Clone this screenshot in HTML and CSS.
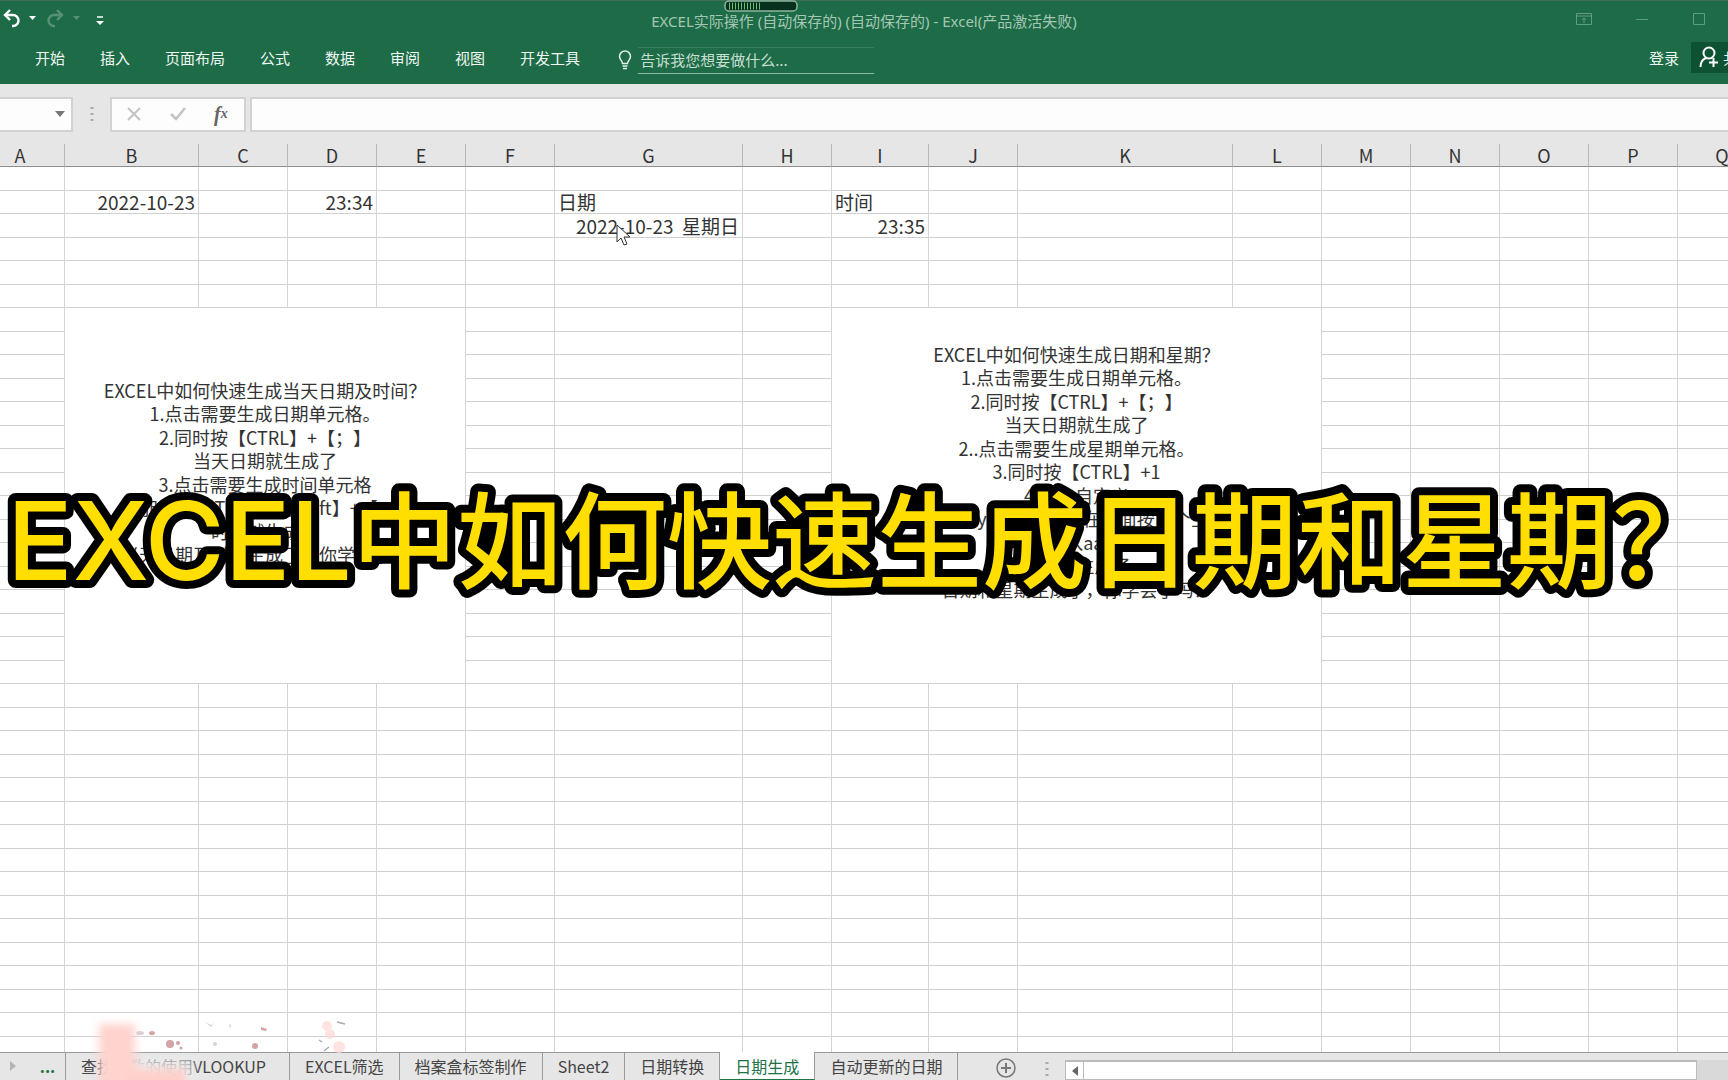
FILE: index.html
```html
<!DOCTYPE html>
<html lang="zh-CN">
<head>
<meta charset="utf-8">
<title>EXCEL实际操作 - Excel</title>
<link rel="stylesheet" href="styles.css">
</head>
<body>
<div class="app">
  <header class="ribbon">
    <div class="titlebar">
      <div class="quick">
        <button class="tool" aria-label="撤消"><svg width="36" height="20" viewBox="0 0 36 20"><path d="M10 2 5 7l5 5M6 7h7a5 5 0 0 1 0 11h-1" fill="none" stroke="#fff" stroke-width="2.4"/><path d="M29 8h7l-3.500 4z" fill="#fff"/></svg></button>
        <button class="tool faded" aria-label="恢复"><svg width="36" height="20" viewBox="0 0 36 20"><path d="M13 2l5 5-5 5M17 7h-7a5 5 0 0 0 0 11h1" fill="none" stroke="#fff" stroke-width="2.400"/><path d="M29 8h7l-3.500 4z" fill="#fff"/></svg></button>
        <button class="tool" aria-label="自定义快速访问工具栏"><svg width="8" height="20" viewBox="0 0 8 20"><path d="M1 9h6" stroke="#fff" stroke-width="1.500"/><path d="M0 13h8l-4 4z" fill="#fff"/></svg></button>
      </div>
      <h1 class="doc">EXCEL实际操作 (自动保存的) (自动保存的) - Excel(产品激活失败)</h1>
      <div class="window">
        <button class="tool" aria-label="功能区显示选项"><svg width="16" height="14" viewBox="0 0 16 14"><path d="M.5 1.500h15v11H.5zM.5 4h15M8 11V6M6 8l2-2 2 2" fill="none" stroke="#5f9d7f"/></svg></button>
        <button class="tool" aria-label="最小化"><svg width="14" height="14" viewBox="0 0 14 14"><path d="M1 7.500h12" stroke="#5f9d7f"/></svg></button>
        <button class="tool" aria-label="最大化"><svg width="14" height="14" viewBox="0 0 14 14"><path d="M1.500 1.500h11v11h-11z" fill="none" stroke="#5f9d7f"/></svg></button>
      </div>
      <svg class="meter" width="74" height="12" viewBox="0 0 74 12" aria-hidden="true"><rect x="1" y="1" width="72" height="10" rx="4" fill="#08301f" stroke="#8fb5a0" stroke-width="1.500"/><path d="M5 6h33" stroke="#6cc06a" stroke-width="7" stroke-dasharray="1 2"/></svg>
    </div>
    <nav class="menu">
      <a href="#">开始</a><a href="#">插入</a><a href="#">页面布局</a><a href="#">公式</a><a href="#">数据</a><a href="#">审阅</a><a href="#">视图</a><a href="#">开发工具</a>
      <label class="tell"><svg width="14" height="20" viewBox="0 0 14 20"><path d="M4.500 13.500C4.500 11 1.500 9.500 1.500 6.500a5.500 5.500 0 0 1 11 0c0 3-3 4.500-3 7zM4.500 16h5M5 18.500h4" fill="none" stroke="#e4f1ea" stroke-width="1.500"/></svg><input type="text" placeholder="告诉我您想要做什么..." aria-label="告诉我您想要做什么"></label>
      <div class="account">
        <a href="#">登录</a>
        <button class="share"><svg width="20" height="22" viewBox="0 0 20 22"><circle cx="10" cy="7" r="5.500" fill="none" stroke="#fff" stroke-width="2"/><path d="M1.500 21c0-5 2.500-8 6-9M14.500 12v9M10 16.500h9" fill="none" stroke="#fff" stroke-width="2"/></svg><span>共享</span></button>
      </div>
    </nav>
  </header>

  <div class="formula">
    <button class="namebox" aria-label="名称框"><svg width="10" height="6" viewBox="0 0 10 6"><path d="M0 0h10L5 6z" fill="#777"/></svg></button>
    <svg class="grip" width="4" height="16" viewBox="0 0 4 16"><path d="M2 1v14" stroke="#aaa" stroke-width="3" stroke-dasharray="2 4"/></svg>
    <div class="actions">
      <button class="tool" aria-label="取消"><svg width="16" height="14" viewBox="0 0 16 14"><path d="M2 1l12 12M14 1L2 13" stroke="#c2c2c2" stroke-width="2"/></svg></button>
      <button class="tool" aria-label="输入"><svg width="16" height="14" viewBox="0 0 16 14"><path d="M1 7l5 5 9-11" fill="none" stroke="#c2c2c2" stroke-width="2.500"/></svg></button>
      <button class="tool fx" aria-label="插入函数">f<sub>x</sub></button>
    </div>
    <input class="entry" type="text" aria-label="编辑栏">
  </div>

  <main class="sheet">
    <table class="grid">
      <colgroup><col class="n"><col class="b"><col class="n" span="4"><col class="g"><col class="n"><col class="i"><col class="n"><col class="k"><col class="n" span="6"></colgroup>
      <thead><tr><th>A</th><th>B</th><th>C</th><th>D</th><th>E</th><th>F</th><th>G</th><th>H</th><th>I</th><th>J</th><th>K</th><th>L</th><th>M</th><th>N</th><th>O</th><th>P</th><th>Q</th></tr></thead>
      <tbody id="rows"></tbody>
    </table>
    <svg class="pointer" width="16" height="24" viewBox="0 0 16 24" aria-hidden="true"><path d="M1 1v17l4-4 3 7 3-1-3-7h6z" fill="#fff" stroke="#333"/></svg>
  </main>

  <footer class="tabs">
    <button class="tool next" aria-label="下一个工作表"><svg width="6" height="10" viewBox="0 0 6 10"><path d="M0 0l6 5-6 5z" fill="#b5b5b5"/></svg></button>
    <button class="tool more" aria-label="更多工作表">...</button>
    <a class="tab first" href="#">查找函数的使用VLOOKUP</a><a class="tab" href="#">EXCEL筛选</a><a class="tab" href="#">档案盒标签制作</a><a class="tab" href="#">Sheet2</a><a class="tab" href="#">日期转换</a><a class="tab active" href="#">日期生成</a><a class="tab" href="#">自动更新的日期</a>
    <button class="tool add" aria-label="新工作表"><svg width="20" height="20" viewBox="0 0 20 20"><circle cx="10" cy="10" r="9" fill="none" stroke="#777" stroke-width="1.500"/><path d="M10 5v10M5 10h10" stroke="#777" stroke-width="2"/></svg></button>
    <svg class="grip" width="4" height="16" viewBox="0 0 4 16"><path d="M2 1v14" stroke="#aaa" stroke-width="3" stroke-dasharray="2 4"/></svg>
    <div class="scroll"><button class="tool" aria-label="向左滚动"><svg width="6" height="10" viewBox="0 0 6 10"><path d="M6 0v10L0 5z" fill="#666"/></svg></button><div class="track"></div></div>
    <div class="end"></div>
  </footer>

  <svg class="petals" width="280" height="70" viewBox="0 0 280 70" aria-hidden="true">
    <defs><filter id="soft" x="-30%" y="-30%" width="160%" height="160%"><feGaussianBlur stdDeviation="4"/></filter></defs>
    <g filter="url(#soft)"><path d="M48 48h20v30H48z" fill="#efe6e5"/><path d="M62 48h52v30H62z" fill="#ededed" opacity=".8"/><path d="M19 14h36v70H19z" fill="#ffd3ce"/><path d="M50 59h56v30H50z" fill="#ffcfca"/></g>
    <g fill="#ffdcdc" opacity=".8"><circle cx="247" cy="16" r="5"/><circle cx="250" cy="24" r="5"/><circle cx="259" cy="37" r="6"/></g>
    <g fill="#d3a3a8"><circle cx="90" cy="34" r="4"/><ellipse cx="72" cy="23" rx="3" ry="2"/><circle cx="175" cy="36" r="3"/><path d="M181 17l6 2-1 2-5-1z"/><circle cx="98" cy="33" r="2"/><circle cx="101" cy="38" r="1.500"/></g>
    <g fill="#ddd0d3"><ellipse cx="60" cy="23" rx="4" ry="2"/><circle cx="135" cy="34" r="2"/><path d="M125 12l6 3 3-2-3 4zM149 14l2 1-1 4z"/></g>
    <path d="M257 12l8 2M239 30l3 2M244 41l5-4" stroke="#aaa" stroke-width="1.500"/>
  </svg>

  <svg class="caption"><text x="7" y="120"><tspan class="latin">EXCEL</tspan>中如何快速生成日期和星期？</text></svg>
</div>
<script src="sheet.js"></script>
</body>
</html>
```
FILE: styles.css
```css
* { box-sizing: border-box; }
body {
  margin: 0;
  font-family: "Noto Sans CJK SC", sans-serif;
  font-size: 15px;
  color: #333;
}
a { color: inherit; text-decoration: none; }
button, input { font: inherit; color: inherit; margin: 0; padding: 0; border: 0; border-radius: 0; outline: 0; }
svg { display: block; flex: none; }
.app { position: relative; display: flex; flex-direction: column; height: 100vh; overflow: hidden; background: #fff; }
.tool { display: flex; align-items: center; justify-content: center; background: none; }

.ribbon { flex: none; height: 84px; background: #1e6b47; border-top: 1px solid #3f6f56; color: #f0f7f3; }
.titlebar { position: relative; display: grid; grid-template-columns: 1fr auto 1fr; height: 40px; }
.quick { display: flex; align-items: flex-start; gap: 8px; padding-top: 7px; }
.quick .tool:last-child { margin-left: 8px; }
.faded { opacity: .25; }
.doc { margin: 0; font-family: "Noto Sans", "Noto Sans CJK SC", sans-serif; font-size: 15px; font-weight: 400; line-height: 40px; color: #a3c7b3; }
.window { display: flex; align-items: flex-start; justify-content: flex-end; gap: 43px; padding: 11px 22px 0 0; }
.meter { position: absolute; top: -1px; left: 724px; }
.menu { display: flex; align-items: center; gap: 35px; height: 32px; padding-left: 35px; white-space: nowrap; }
.tell { display: flex; align-items: center; gap: 6px; margin: 6px 0 0 3px; }
.tell input { width: 236px; height: 27px; padding: 0 0 2px 2px; background: none; border-top: 1px solid #387e5c; border-bottom: 1px solid #8db8a1; }
.tell input::placeholder { color: #c5dfd0; opacity: 1; }
.account { display: flex; align-items: center; gap: 12px; width: 79px; margin-left: auto; }
.share { display: flex; align-items: center; gap: 4px; height: 31px; padding: 0 8px; background: #0d5232; }

.formula { flex: none; display: flex; align-items: center; height: 60px; background: #e6e6e6; }
.namebox { display: flex; align-items: center; justify-content: flex-end; width: 73px; height: 35px; padding-right: 6px; background: #fdfdfd; border: 2px solid #d2d2d2; border-left: 0; }
.formula .grip { margin: 0 16px 0 17px; }
.actions { display: flex; align-items: center; gap: 28px; width: 136px; height: 35px; padding-left: 14px; background: #fdfdfd; border: 2px solid #d2d2d2; }
.fx { font-family: "Liberation Serif", serif; font-size: 20px; font-style: italic; font-weight: 700; color: #666; }
.fx sub { font-size: 14px; }
.entry { flex: 1; height: 35px; margin-left: 4px; padding: 0 8px; background: #fdfdfd; border: 2px solid #d2d2d2; border-right: 0; }

.sheet { position: relative; flex: 1; min-height: 0; overflow: hidden; }
.grid { width: 1791px; margin-left: -24px; table-layout: fixed; border-collapse: separate; border-spacing: 0; font-size: 19px; line-height: 22px; text-spacing-trim: space-all; }
.n { width: 89px; }
.b { width: 134px; }
.g { width: 188px; }
.i { width: 97px; }
.k { width: 215px; }
th { height: 23px; padding: 0; font-size: 18px; font-weight: 400; background: #e6e6e6; border-bottom: 1px solid #8f8f8f; border-right: 1px solid #b8b8b8; }
td { padding: 0 3px; border-right: 1px solid #d4d4d4; border-bottom: 1px solid #d0d0d0; white-space: nowrap; }
tbody tr { height: 23px; }
tbody tr:nth-child(odd) { height: 24px; }
.num { text-align: right; }
.note { padding-bottom: 48px; font-size: 18px; text-align: center; vertical-align: middle; }
.note p { margin: 0; line-height: 23px; }
.note p:nth-child(odd) { line-height: 24px; }
.pointer { position: absolute; top: 80px; left: 616px; }

.tabs { flex: none; display: flex; align-items: stretch; height: 28px; background: #e6e6e6; box-shadow: inset 0 1px #999; font-size: 16px; line-height: 28px; color: #444; white-space: nowrap; }
.next { width: 26px; }
.more { width: 40px; padding-left: 4px; font-weight: 700; color: #217346; border-right: 1px solid #999; }
.tab { padding: 0 15px; border-right: 1px solid #999; }
.first { width: 224px; }
.active { background: #fff; color: #217346; border-bottom: 1px solid #217346; }
.add { margin: 6px 0 0 38px; height: 20px; }
.tabs .grip { margin: 9px 16px 0 29px; }
.scroll { flex: 1; display: flex; height: 20px; margin-top: 8px; border: 1px solid #bbb; border-top-width: 2px; background: #fff; }
.scroll .tool { width: 18px; border-right: 1px solid #bbb; }
.track { flex: 1; }
.end { width: 31px; margin-top: 8px; background: #d9d9d9; }

.petals { position: absolute; left: 80px; bottom: 0; }
.caption { position: absolute; left: 0; top: 460px; width: 100%; height: 160px; pointer-events: none; }
.caption text {
  font-family: "Noto Sans CJK SC", sans-serif;
  font-size: 105px;
  font-weight: 500;
  fill: #ffde00;
  stroke: #000;
  stroke-width: 16px;
  stroke-linejoin: round;
  paint-order: stroke;
}
.caption .latin { font-family: Inter, sans-serif; font-size: 109px; }
```
FILE: sheet.js
```js
const ROWS = 38;
const COLS = 17;
const cells = {
  '2,1': ['num', '2022-10-23'],
  '2,3': ['num', '23:34'],
  '2,6': ['', '日期'],
  '2,8': ['', '时间'],
  '3,6': ['num', '2022-10-23\u00a0\u00a0星期日'],
  '3,8': ['num', '23:35'],
};
const notes = {
  1: [
    'EXCEL中如何快速生成当天日期及时间？', '1.点击需要生成日期单元格。', '2.同时按【CTRL】+【；】', '当天日期就生成了',
    '3.点击需要生成时间单元格', '4.同时按【CTRL】+【Shift】+【；】', '时间就生成了', '当天日期及时间生成了，你学会了吗'],
  8: [
    'EXCEL中如何快速生成日期和星期？', '1.点击需要生成日期单元格。', '2.同时按【CTRL】+【；】', '当天日期就生成了',
    '2..点击需要生成星期单元格。', '3.同时按【CTRL】+1', '4.点击自定义', '5.输入yyyy-mm-dd在后面按两个空格', '再输入aaaa', '日期就生成了', '日期和星期生成了，你学会了吗？'],
};
const body = document.getElementById('rows');
for (let r = 1; r <= ROWS; r++) {
  const tr = body.insertRow();
  for (let c = 0; c < COLS; c++) {
    const inNote = r >= 7 && r <= 22 && ((c >= 1 && c <= 4) || (c >= 8 && c <= 11));
    if (inNote && !(r === 7 && notes[c])) continue;
    const td = tr.insertCell();
    if (inNote) {
      td.className = 'note';
      td.rowSpan = 16;
      td.colSpan = 4;
      for (const line of notes[c]) {
        const p = document.createElement('p');
        p.textContent = line;
        td.append(p);
      }
    } else if (cells[`${r},${c}`]) {
      [td.className, td.textContent] = cells[`${r},${c}`];
    }
  }
}
```
